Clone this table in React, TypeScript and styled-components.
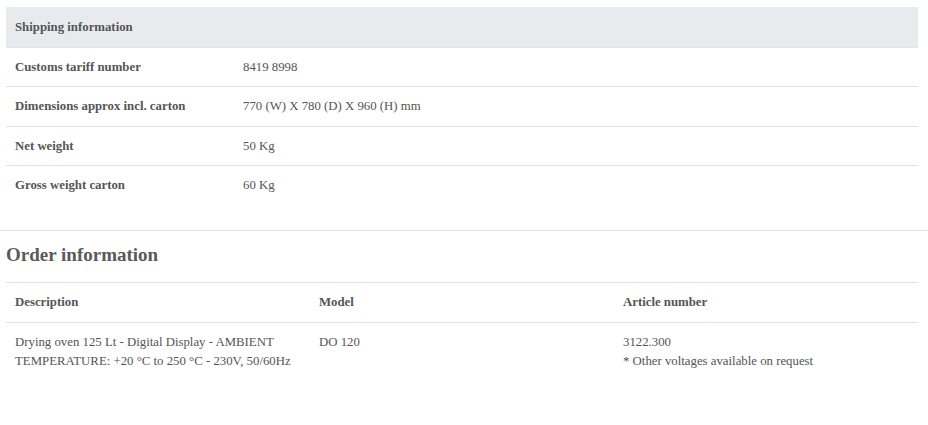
import React from "react";
import styled, { createGlobalStyle } from "styled-components";

const Global = createGlobalStyle`
  html, body { margin: 0; padding: 0; background: #fff; }
  body { font-family: "Liberation Serif", "Times New Roman", serif; color: #555; }
`;

const Page = styled.div`
  display: flex;
  flex-direction: column;
  padding-top: 7px;
`;

const Section = styled.section`
  padding: 0 10px 0 6px;
`;

const Table = styled.table`
  width: 100%;
  border-collapse: collapse;
  table-layout: fixed;
  font-size: 12.8px;
  line-height: 19px;
`;

const HeadCell = styled.th<{ $shaded?: boolean }>`
  text-align: left;
  font-weight: bold;
  color: #555;
  padding: ${(p) => (p.$shaded ? "11px 9px 10px" : "10px 9px 10px")};
  vertical-align: top;
  background: ${(p) => (p.$shaded ? "#e8ebee" : "transparent")};
  border-top: ${(p) => (p.$shaded ? "none" : "1px solid #e2e2e2")};
  border-bottom: 1px solid #e2e2e2;
`;

const Row = styled.tr<{ $last?: boolean }>`
  border-bottom: ${(p) => (p.$last ? "none" : "1px solid #e2e2e2")};
`;

const LabelCol = styled.col`
  width: 228px;
`;

const LabelCell = styled.td`
  font-weight: bold;
  padding: 10px 9px 9.3px;
  vertical-align: top;
`;

const ValueCell = styled.td`
  padding: 10px 9px 9.3px;
  vertical-align: top;
`;

const OrderCell = styled.td`
  padding: 10px 9px;
  vertical-align: top;
`;

const Divider = styled.hr`
  margin: 26px 0 0;
  border: none;
  border-top: 1px solid #e2e2e2;
  height: 0;
`;

const Heading = styled.h2`
  margin: 12px 0 15px;
  font-size: 19px;
  line-height: 24px;
  font-weight: bold;
  color: #5a5a5a;
`;

const shipping = [
  ["Customs tariff number", "8419 8998"],
  ["Dimensions approx incl. carton", "770 (W) X 780 (D) X 960 (H) mm"],
  ["Net weight", "50 Kg"],
  ["Gross weight carton", "60 Kg"],
];

export default function App() {
  return (
    <Page>
      <Global />
      <Section>
        <Table>
          <colgroup>
            <LabelCol />
            <col />
          </colgroup>
          <thead>
            <tr>
              <HeadCell $shaded colSpan={2}>Shipping information</HeadCell>
            </tr>
          </thead>
          <tbody>
            {shipping.map(([k, v], i) => (
              <Row key={k} $last={i === shipping.length - 1}>
                <LabelCell>{k}</LabelCell>
                <ValueCell>{v}</ValueCell>
              </Row>
            ))}
          </tbody>
        </Table>
      </Section>
      <Divider />
      <Section>
        <Heading>Order information</Heading>
        <Table>
          <thead>
            <tr>
              <HeadCell>Description</HeadCell>
              <HeadCell>Model</HeadCell>
              <HeadCell>Article number</HeadCell>
            </tr>
          </thead>
          <tbody>
            <Row $last>
              <OrderCell>
                Drying oven 125 Lt - Digital Display - AMBIENT
                <br />
                TEMPERATURE: +20 °C to 250 °C - 230V, 50/60Hz
              </OrderCell>
              <OrderCell>DO 120</OrderCell>
              <OrderCell>
                3122.300
                <br />* Other voltages available on request
              </OrderCell>
            </Row>
          </tbody>
        </Table>
      </Section>
    </Page>
  );
}
